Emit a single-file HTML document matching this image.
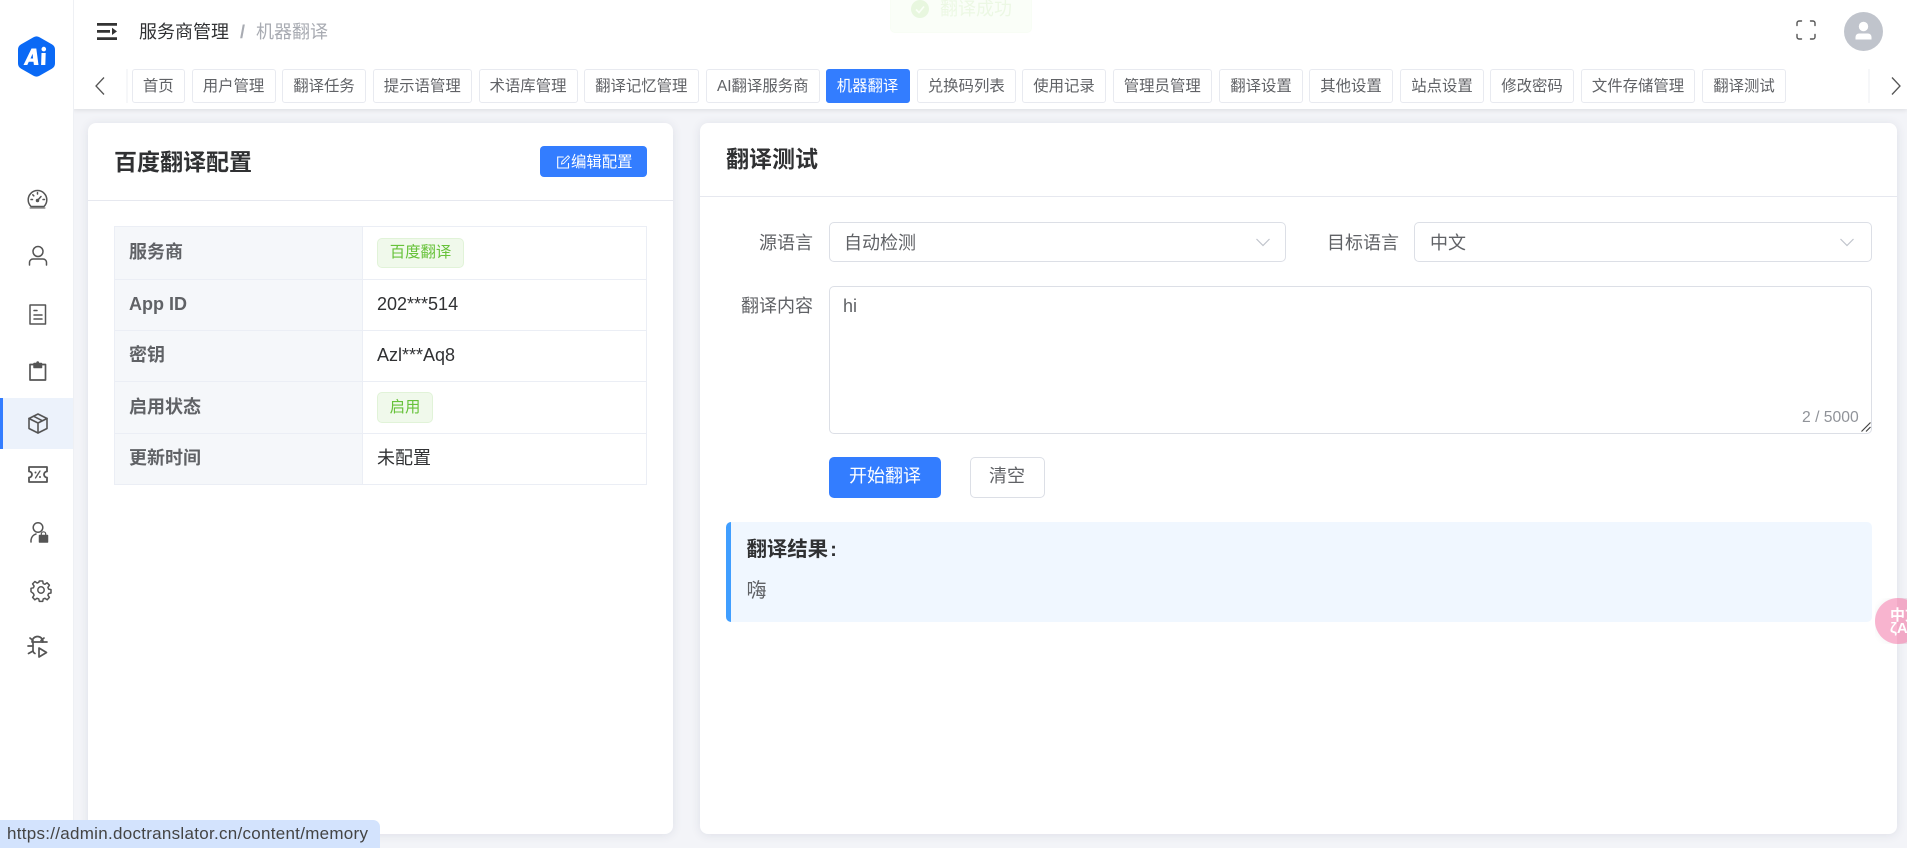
<!DOCTYPE html>
<html lang="zh"><head><meta charset="utf-8"><title>机器翻译</title>
<style>
*{box-sizing:border-box}
html,body{margin:0;padding:0;width:1907px;height:848px;overflow:hidden;background:#f3f4f8;font-family:"Liberation Sans","Noto Sans CJK SC",sans-serif;color:#606266}
.a{position:absolute;white-space:nowrap}
.side{left:0;top:0;width:74px;height:848px;background:#fff;border-right:1px solid #eef0f4}
.head{left:73px;top:0;width:1834px;height:108.500px;background:#fff;box-shadow:0 1px 5px rgba(0,0,0,.10)}
.tab{top:69px;height:34px;line-height:33.500px;font-size:15.400px;text-align:center;background:#fff;border:1px solid #e8eaf0;border-radius:3px;color:#606266}
.tab.on{background:#337dff;border-color:#337dff;color:#fff}
.card{background:#fff;border-radius:8px;box-shadow:0 1px 10px rgba(40,50,90,.10)}
.lb{font-weight:700;font-size:18px;color:#606266;left:129px;line-height:24px}
.val{font-size:18px;color:#303133;left:377px;line-height:24px}
.tag{left:377px;background:#f0f9eb;border:1px solid #e1f3d8;color:#67c23a;border-radius:5px;font-size:15.400px;text-align:center}
.fl{font-size:18px;color:#606266;line-height:24px}
.ipt{background:#fff;border:1px solid #dcdfe6;border-radius:5px}
svg{display:block;overflow:visible}
.ic{fill:none;stroke:#555;stroke-width:1.500;stroke-linecap:round;stroke-linejoin:round}
</style></head><body>

<div class="a head"></div>
<div class="a side"></div>

<!-- logo -->
<svg class="a" style="left:18px;top:36px" width="37" height="41" viewBox="0 0 37 41">
<path d="M15.500 1.200a6 6 0 0 1 6 0l12.500 7.200a6 6 0 0 1 3 5.200v13.800a6 6 0 0 1-3 5.200l-12.500 7.200a6 6 0 0 1-6 0L3 32.600a6 6 0 0 1-3-5.200V13.600a6 6 0 0 1 3-5.200z" fill="#0a69f5"/>
<path d="M5.500 29 13.500 12.500h4.800L20.500 29h-4.600l-.4-3.200h-4.700L9.300 29zM12.500 22.500h2.600l-.5-4.700zM23.500 17h4.200l-.4 12h-4.200zM25.800 10.800a2.300 2.300 0 1 1-.01 4.600 2.300 2.300 0 0 1 .01-4.600z" fill="#fff"/>
</svg>

<!-- sidebar active -->
<div class="a" style="left:0;top:398px;width:73px;height:51px;background:#ecf2fb;border-left:3px solid #337dff"></div>

<!-- sidebar icons -->
<svg class="a ic" style="left:27px;top:189px" width="21" height="21" viewBox="0 0 21 21">
<path d="M4 17.500a9.300 9.300 0 1 1 13 0z"/><path d="M3 19h15" stroke-width="1"/><path d="M10.500 11.500 14 7.500M10.500 3.500v1.500M4 10.500h1.500M16 10.500h1.500M5.800 5.800l1 1"/><circle cx="10.500" cy="11.500" r="1" fill="#555"/></svg>
<svg class="a ic" style="left:28px;top:246px" width="20" height="20" viewBox="0 0 20 20">
<circle cx="10" cy="5.500" r="5"/><path d="M1.500 19v-2.500a3.500 3.500 0 0 1 3.500-3.500h10a3.500 3.500 0 0 1 3.500 3.500V19"/></svg>
<svg class="a ic" style="left:29px;top:304px" width="18" height="21" viewBox="0 0 18 21">
<path d="M1 1h15.500v19H1z"/><path d="M5 6.500h3M5 11h8M5 15h8"/></svg>
<svg class="a ic" style="left:29px;top:361px" width="18" height="20" viewBox="0 0 18 20">
<path d="M5 3.500H1v15.500h15.500V3.500H12.500" stroke-width="1.700"/><path d="M5 2.500h7.500v4H5z" fill="#555"/><circle cx="8.700" cy="1.700" r="1.400" fill="#555" stroke="none"/></svg>
<svg class="a ic" style="left:28px;top:413px" width="20" height="21" viewBox="0 0 20 21">
<path d="M10 1 1 5.500v10L10 20l9-4.500v-10z" stroke-width="1.600"/><path d="M1 5.500 10 10l9-4.500M10 10v10M5.500 3.200 14.500 7.800" stroke-width="1.600"/></svg>
<svg class="a ic" style="left:28px;top:466px" width="20" height="17" viewBox="0 0 20 17">
<path d="M1 1h18v4.500a3 3 0 0 0 0 6V16H1v-4.500a3 3 0 0 0 0-6z" stroke-width="1.800"/><path d="M7.500 12 12 5" stroke-width="1.300"/><circle cx="7.500" cy="6.500" r="1" fill="#555" stroke="none"/><circle cx="12" cy="11" r="1" fill="#555" stroke="none"/></svg>
<svg class="a ic" style="left:30px;top:522px" width="18" height="21" viewBox="0 0 18 21">
<circle cx="8" cy="5.500" r="4.800"/><path d="M1 20v-2a7 7 0 0 1 5-6"/><path d="M9.500 13.500h8v6.500h-8z" fill="#555"/><path d="M11.300 13.500v-1.500a2.200 2.200 0 0 1 4.400 0v1.500" stroke-width="1.200"/></svg>
<svg class="a ic" style="left:31px;top:580px" width="20" height="20" viewBox="0 0 20 20">
<path d="M8.300 1h3.400l.5 2.600 1.700.7 2.200-1.500 2.300 2.400-1.500 2.200.7 1.700 2.400.5v3.400l-2.400.5-.7 1.700 1.500 2.200-2.300 2.400-2.200-1.500-1.700.7-.5 2.400H8.300l-.5-2.400-1.700-.7-2.200 1.500-2.300-2.400 1.500-2.200-.7-1.700L0 11.700V8.300l2.400-.5.700-1.700-1.500-2.200 2.300-2.400 2.200 1.500 1.700-.7z"/><circle cx="10" cy="10" r="3.200"/></svg>
<svg class="a ic" style="left:27px;top:637px" width="21" height="21" viewBox="0 0 21 21">
<path d="M5 5a5.500 5.500 0 0 1 11 0zM6 5v9a3.500 3.500 0 0 0 2 2.500" stroke-width="1.700"/><path d="M3 1l3 2.500M17 1l-3 2.500M1 9h5M1.500 16.500 6 14M15 5h5" stroke-width="1.700"/><path d="M12 11l7.500 4.500L12 20z" stroke-width="1.700"/></svg>

<!-- header left -->
<svg class="a" style="left:97px;top:23px" width="20" height="17" viewBox="0 0 20 17">
<path d="M0 0h20v2.700H0zM0 14.300h20V17H0zM0 7h13v2.700H0z" fill="#333"/><path d="M15 4.700 20 8.400 15 12z" fill="#333"/></svg>
<div class="a" style="left:139px;top:19px;font-size:18px;line-height:26px;color:#303133">服务商管理</div>
<div class="a" style="left:240px;top:19px;font-size:18px;line-height:26px;color:#a8abb2;font-weight:700">/</div>
<div class="a" style="left:256px;top:19px;font-size:18px;line-height:26px;color:#a8abb2">机器翻译</div>

<!-- toast -->
<div class="a" style="left:890px;top:-10px;width:142px;height:43px;background:#fafef8;border:1px solid #f8fdf5;border-radius:5px"></div>
<svg class="a" style="left:911px;top:0" width="18" height="18" viewBox="0 0 18 18"><circle cx="9" cy="9" r="9" fill="#e8f7df"/><path d="M5 9.500l3 3 5-6" stroke="#fafff7" stroke-width="1.700" fill="none"/></svg>
<div class="a" style="left:940px;top:-3px;font-size:18px;line-height:24px;color:#ecf8e4">翻译成功</div>

<!-- header right -->
<svg class="a" style="left:1796px;top:20px" width="20" height="20" viewBox="0 0 20 20" fill="none" stroke="#555" stroke-width="1.400" stroke-linecap="round">
<path d="M1 5.500V3a2 2 0 0 1 2-2h2.500M14.500 1H17a2 2 0 0 1 2 2v2.500M19 14.500V17a2 2 0 0 1-2 2h-2.500M5.500 19H3a2 2 0 0 1-2-2v-2.500"/></svg>
<svg class="a" style="left:1844px;top:12px" width="39" height="39" viewBox="0 0 39 39"><circle cx="19.500" cy="19.500" r="19.500" fill="#c0c4cc"/><circle cx="19.500" cy="14.500" r="4.700" fill="#fff"/><path d="M11.500 27.500v-2.500a3.500 3.500 0 0 1 3.500-3.500h9a3.500 3.500 0 0 1 3.500 3.500v2.500z" fill="#fff"/></svg>

<!-- tabs -->
<svg class="a" style="left:95px;top:77px" width="10" height="18" viewBox="0 0 10 18"><path d="M9 .5 1 9l8 8.500" fill="none" stroke="#555" stroke-width="1.300"/></svg>
<div class="a" style="left:126px;top:69px;width:2px;height:34px;background:#f6f7f9"></div>
<div class="a tab" style="left:132px;width:52.500px">首页</div>
<div class="a tab" style="left:191.500px;width:84px">用户管理</div>
<div class="a tab" style="left:282px;width:84px">翻译任务</div>
<div class="a tab" style="left:373px;width:98.500px">提示语管理</div>
<div class="a tab" style="left:478.500px;width:99px">术语库管理</div>
<div class="a tab" style="left:584px;width:114.500px">翻译记忆管理</div>
<div class="a tab" style="left:706px;width:113.500px">AI翻译服务商</div>
<div class="a tab on" style="left:825.500px;width:84px">机器翻译</div>
<div class="a tab" style="left:917px;width:98.500px">兑换码列表</div>
<div class="a tab" style="left:1022px;width:84px">使用记录</div>
<div class="a tab" style="left:1113px;width:98.500px">管理员管理</div>
<div class="a tab" style="left:1219px;width:84px">翻译设置</div>
<div class="a tab" style="left:1309px;width:84px">其他设置</div>
<div class="a tab" style="left:1400px;width:84px">站点设置</div>
<div class="a tab" style="left:1490px;width:84px">修改密码</div>
<div class="a tab" style="left:1581px;width:114px">文件存储管理</div>
<div class="a tab" style="left:1702px;width:84px">翻译测试</div>
<div class="a" style="left:1868px;top:69px;width:2px;height:34px;background:#f6f7f9"></div>
<svg class="a" style="left:1891px;top:77px" width="10" height="18" viewBox="0 0 10 18"><path d="M1 .5 9 9l-8 8.500" fill="none" stroke="#555" stroke-width="1.300"/></svg>

<!-- left card -->
<div class="a card" style="left:88px;top:123px;width:585px;height:711px"></div>
<div class="a" style="left:88px;top:200px;width:585px;height:1px;background:#e6e8ef"></div>
<div class="a" style="left:114px;top:146px;font-size:23px;font-weight:700;line-height:32px;color:#303133">百度翻译配置</div>
<div class="a" style="left:540px;top:146px;width:107px;height:31px;background:#337dff;border-radius:4px"></div>
<svg class="a" style="left:557px;top:155px" width="13" height="14" viewBox="0 0 13 14" fill="none" stroke="#fff" stroke-width="1.100"><path d="M11.500 8v5H.7V2h6"/><path d="M4.500 9l.5-2.500L11 .8l1.500 1.500L6.700 8.500z" stroke-width=".9"/></svg>
<div class="a" style="left:571px;top:152px;font-size:15.400px;line-height:22px;color:#fff">编辑配置</div>

<!-- table -->
<div class="a" style="left:114px;top:226px;width:533px;height:259px;border:1px solid #ebeef5"></div>
<div class="a" style="left:115px;top:227px;width:247.500px;height:257px;background:#f5f7fa"></div>
<div class="a" style="left:362px;top:227px;width:1px;height:257px;background:#ebeef5"></div>
<div class="a" style="left:115px;top:279px;width:531px;height:1px;background:#ebeef5"></div>
<div class="a" style="left:115px;top:330px;width:531px;height:1px;background:#ebeef5"></div>
<div class="a" style="left:115px;top:381px;width:531px;height:1px;background:#ebeef5"></div>
<div class="a" style="left:115px;top:433px;width:531px;height:1px;background:#ebeef5"></div>
<div class="a lb" style="top:240px">服务商</div>
<div class="a lb" style="top:292px">App ID</div>
<div class="a lb" style="top:343px">密钥</div>
<div class="a lb" style="top:395px">启用状态</div>
<div class="a lb" style="top:446px">更新时间</div>
<div class="a tag" style="top:238px;width:87px;height:30px;line-height:28px">百度翻译</div>
<div class="a val" style="top:292px">202***514</div>
<div class="a val" style="top:343px">Azl***Aq8</div>
<div class="a tag" style="top:392px;width:56px;height:31px;line-height:29px">启用</div>
<div class="a val" style="top:446px">未配置</div>

<!-- right card -->
<div class="a card" style="left:700px;top:123px;width:1197px;height:711px"></div>
<div class="a" style="left:700px;top:196px;width:1197px;height:1px;background:#e6e8ef"></div>
<div class="a" style="left:726px;top:143px;font-size:23px;font-weight:700;line-height:32px;color:#303133">翻译测试</div>

<div class="a fl" style="left:759px;top:231px">源语言</div>
<div class="a ipt" style="left:829px;top:222px;width:456.500px;height:40px"></div>
<div class="a" style="left:844px;top:231px;font-size:18px;line-height:24px;color:#606266">自动检测</div>
<svg class="a" style="left:1256px;top:238px" width="14" height="9" viewBox="0 0 14 9"><path d="M.5 1 7 7.500 13.500 1" fill="none" stroke="#c0c4cc" stroke-width="1.200"/></svg>

<div class="a fl" style="left:1327px;top:231px">目标语言</div>
<div class="a ipt" style="left:1414px;top:222px;width:458px;height:40px"></div>
<div class="a" style="left:1430px;top:231px;font-size:18px;line-height:24px;color:#606266">中文</div>
<svg class="a" style="left:1840px;top:238px" width="14" height="9" viewBox="0 0 14 9"><path d="M.5 1 7 7.500 13.500 1" fill="none" stroke="#c0c4cc" stroke-width="1.200"/></svg>

<div class="a fl" style="left:741px;top:294px">翻译内容</div>
<div class="a ipt" style="left:829px;top:286px;width:1043px;height:147.500px"></div>
<div class="a" style="left:843px;top:294px;font-size:18px;line-height:24px;color:#606266">hi</div>
<div class="a" style="left:1802px;top:409px;font-size:15.700px;line-height:18px;color:#909399">2 / 5000</div>
<svg class="a" style="left:1861px;top:422px" width="10" height="10" viewBox="0 0 10 10"><path d="M.5 9.500 9.500.5M5 9.500l4.500-4.500" stroke="#444" stroke-width="1.200" fill="none"/></svg>

<div class="a" style="left:829px;top:457px;width:112px;height:41px;background:#337dff;border-radius:5px;color:#fff;font-size:18px;line-height:39px;text-align:center">开始翻译</div>
<div class="a" style="left:969.500px;top:457px;width:75px;height:41px;background:#fff;border:1px solid #dcdfe6;border-radius:5px;color:#606266;font-size:18px;line-height:37px;text-align:center">清空</div>

<div class="a" style="left:726px;top:521.500px;width:1146px;height:100px;background:#f0f7ff;border-left:5px solid #409eff;border-radius:5px"></div>
<div class="a" style="left:746.500px;top:536px;font-size:20.400px;font-weight:700;line-height:28px;color:#303133">翻译结果<span style="margin-left:2px">:</span></div>
<div class="a" style="left:746.500px;top:577px;font-size:20px;line-height:28px;color:#606266">嗨</div>

<!-- pink float -->
<div class="a" style="left:1875px;top:597.500px;width:32px;height:46px;overflow:hidden">
<div class="a" style="left:0;top:0;width:46px;height:46px;border-radius:50%;background:#f8b4cf;box-shadow:0 0 8px rgba(0,0,0,.06)"></div>
<div class="a" style="left:22px;top:0;width:10px;height:46px;background:rgba(200,90,140,.12)"></div>
<div class="a" style="left:15px;top:11px;font-size:15px;line-height:14px;color:#fff;font-weight:700">中文</div>
<div class="a" style="left:15px;top:24px;font-size:15px;line-height:14px;color:#fff;font-weight:700">ζA</div>
</div>

<!-- status bar -->
<div class="a" style="left:0;top:819.500px;width:380px;height:28.500px;background:#d3e3fd;border-top-right-radius:7px"></div>
<div class="a" style="left:7px;top:823px;font-size:17px;letter-spacing:.28px;line-height:22px;color:#444">https://admin.doctranslator.cn/content/memory</div>

</body></html>
